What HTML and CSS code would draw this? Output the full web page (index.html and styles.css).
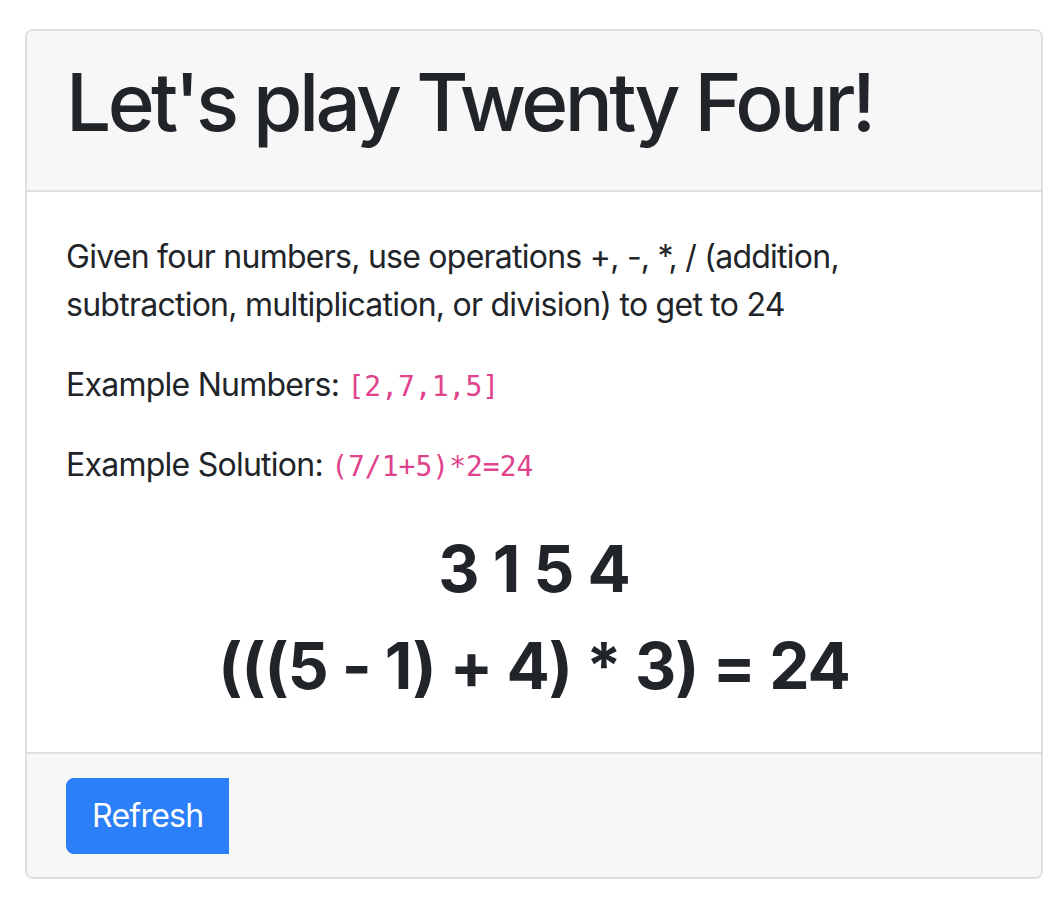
FILE: index.html
```html
<!DOCTYPE html>
<html>
<head>
<meta charset="utf-8">
<link rel="stylesheet" href="styles.css">
</head>
<body>
<div class="page">
  <div class="card">
    <div class="card-header">
      <h1 class="title">Let's play Twenty Four!</h1>
    </div>
    <div class="card-body">
      <p>Given four numbers, use operations +, -, *, / (addition, subtraction, multiplication, or division) to get to 24</p>
      <p>Example Numbers: <code>[2,7,1,5]</code></p>
      <p>Example Solution: <code>(7/1+5)*2=24</code></p>
      <div class="puzzles">
        <h2 class="puzzle">3 1 5 4</h2>
        <h2 class="puzzle">(((5 - 1) + 4) * 3) = 24</h2>
      </div>
    </div>
    <div class="card-footer">
      <button class="btn">Refresh</button>
    </div>
  </div>
</div>
</body>
</html>
```

FILE: styles.css
```css
html, body {
  margin: 0;
  padding: 0;
  background: #ffffff;
}

body {
  font-family: Inter, "Noto Sans", "Liberation Sans", sans-serif;
  font-size: 32px;
  line-height: 1.5;
  color: #212529;
}

.page {
  padding: 29px 17px 0 25px;
}

.card {
  border: 2px solid #dfdfdf;
  border-radius: 8px;
  overflow: hidden;
  background: #ffffff;
}

.card-header {
  background: #f7f7f7;
  padding: 23px 39px 24px;
  border-bottom: 2px solid #dfdfdf;
}

.title {
  margin: 0 0 16px;
  font-size: 80px;
  font-weight: 500;
  line-height: 1.2;
  letter-spacing: -3.6px;
}

.card-body {
  padding: 41px 39px 40px;
  letter-spacing: -0.75px;
}

.card-body p {
  margin: 0 0 32px;
}

code {
  font-family: "DejaVu Sans Mono", "Liberation Mono", monospace;
  font-size: 28px;
  letter-spacing: 0;
  color: #e0428c;
}

.puzzles {
  padding-top: 10px;
}

.puzzle {
  margin: 0 0 20px;
  font-size: 64px;
  font-weight: 700;
  line-height: 1.2;
  text-align: center;
  letter-spacing: -1px;
}

.puzzle:last-child {
  margin-bottom: 7px;
}

.card-footer {
  background: #f7f7f7;
  border-top: 2px solid #dfdfdf;
  padding: 24px 39px 23px;
}

.btn {
  display: block;
  font-family: inherit;
  font-size: 32px;
  line-height: 48px;
  letter-spacing: -0.75px;
  color: #ffffff;
  background: #2b7ff8;
  border: 2px solid #2b7ff8;
  border-radius: 8px 0 0 8px;
  padding: 12px 24px;
  cursor: pointer;
}
```
